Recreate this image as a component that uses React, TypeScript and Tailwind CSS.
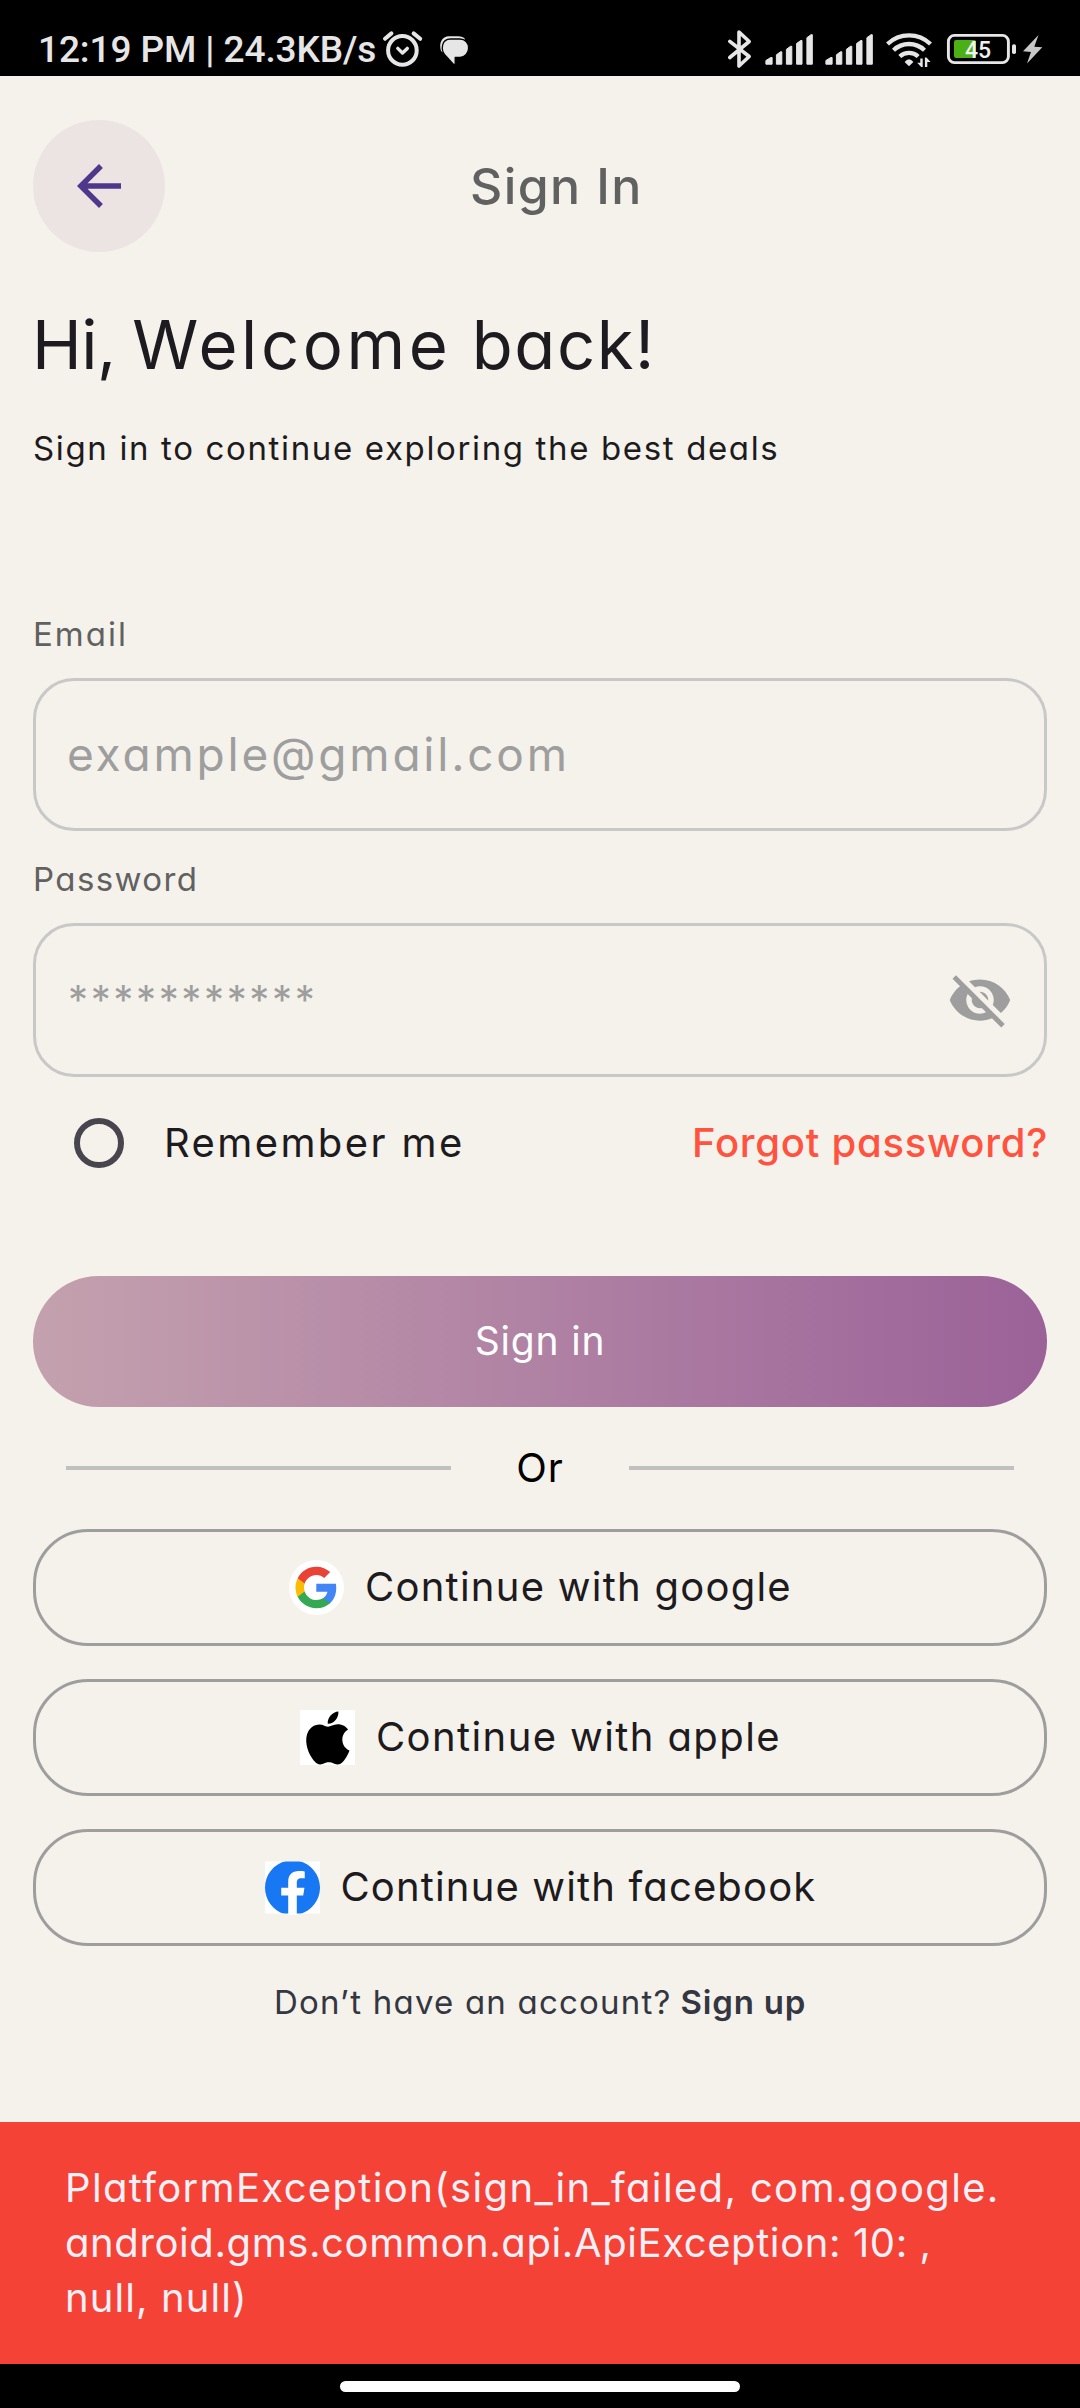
import type { ReactNode } from "react";

const SIGNAL_BARS = [
  [0, 57, 7.2],
  [10.5, 51.3, 6.4],
  [20.5, 45.8, 6.4],
  [30.7, 40, 6.4],
  [41, 34.2, 6.4],
];

function Signal({ x }: { x: number }) {
  return (
    <g>
      {SIGNAL_BARS.map(([dx, top, w]) => (
        <path
          key={dx}
          strokeWidth="1"
          strokeLinejoin="round"
          stroke="#e6e6e6"
          d={`M${x + dx + 0.5} ${top + 3.5} L${x + dx + w - 1.8} ${top + 0.5} H${x + dx + w - 0.5} V64.2 H${x + dx + 0.5} Z`}
        />
      ))}
    </g>
  );
}

function StatusBar() {
  return (
    <div className="flex h-[76px] items-start justify-between bg-black">
      <div className="flex items-start">
        <span className="w-[340px] ml-[38px] pt-[27px] whitespace-nowrap font-['Roboto',sans-serif] text-[37px] leading-[46px] font-medium tracking-[-0.1px] text-[#e6e6e6]">
          12:19 PM | 24.3KB/s
        </span>
        <svg width="96" height="76" viewBox="378 0 96 76" fill="none" stroke="#e6e6e6" strokeLinecap="round" strokeLinejoin="round">
          <circle cx="402.4" cy="50.4" r="14.3" strokeWidth="4" />
          <path strokeWidth="3.4" d="M397.8 48.4l4.7 4.6 4.8-4.6" />
          <path strokeWidth="4" d="M385 38.8l6.4-5.4M413.6 33.4l6.6 5.4" />
          <path
            fill="#e6e6e6"
            stroke="none"
            d="M441 51C438.500 43 442 36.200 449 36.200H458C461.500 36.200 463.500 37 465 39L450 58Z"
          />
          <path
            fill="#e6e6e6"
            stroke="#000"
            strokeWidth="1.3"
            d="M450.500 39H460C465 39 468.600 43 468.600 48S465 57.300 460 57.300H455.200V64.400L453.600 64.400L444.500 54.500C441 50 441 39 450.500 39Z"
          />
        </svg>
      </div>
      <svg width="360" height="76" viewBox="720 0 360 76" fill="#e6e6e6">
        <path
          d="M729.8 41.300L749.200 56.500L739 66V32L749.200 41.500L729.800 57.500"
          fill="none"
          stroke="#e6e6e6"
          strokeWidth="3.6"
          strokeLinejoin="round"
          strokeLinecap="round"
        />
        <Signal x={765.4} />
        <Signal x={825.4} />
        <g fill="none" stroke="#e6e6e6" strokeWidth="4.300">
          <path d="M887.500 44A31 31 0 0 1 930.500 44" />
          <path d="M893.500 50.200A22.500 22.500 0 0 1 924.500 50.200" />
          <path d="M899.800 56.500A13.700 13.700 0 0 1 918.200 56.500" />
        </g>
        <path d="M909 66.300L904.600 62Q909 56.500 913.400 62Z" />
        <path d="M920.300 58.500H922.700V67H921.200L917.200 62.800H920.300ZM924.900 67V57.500H926.500L930.600 62H927.300V67Z" />
        <rect x="948.400" y="35.400" width="60" height="27.200" rx="6" fill="none" stroke="#e6e6e6" strokeWidth="2.900" />
        <rect x="954" y="40" width="22" height="18" rx="2" fill="#4caf13" />
        <text x="978" y="57.500" textAnchor="middle" fontFamily="Roboto" fontWeight="500" fontSize="23" fill="#f0f0f0">
          45
        </text>
        <rect x="1012" y="44.300" width="4" height="9.700" rx="1.800" />
        <path fill="#c8c8c8" d="M1038.500 35L1023 51.300L1031 52L1027 63.500L1042.300 47.200L1034.300 46.700Z" />
      </svg>
    </div>
  );
}

function GoogleIcon() {
  return (
    <svg width="55" height="55" viewBox="0 0 55 55">
      <circle cx="27.500" cy="27.500" r="27.500" fill="#fff" />
      <g transform="translate(4.600 4.800) scale(1.890)">
        <path fill="#4285F4" d="M22.560 12.250c0-.780-.070-1.530-.200-2.250H12v4.260h5.920c-.260 1.370-1.040 2.530-2.210 3.310v2.770h3.570c2.080-1.920 3.280-4.740 3.280-8.090z" />
        <path fill="#34A853" d="M12 23c2.970 0 5.460-.980 7.280-2.660l-3.570-2.770c-.980.660-2.230 1.060-3.710 1.060-2.860 0-5.290-1.930-6.160-4.530H2.180v2.840C3.990 20.530 7.700 23 12 23z" />
        <path fill="#FBBC05" d="M5.840 14.090c-.220-.660-.350-1.360-.350-2.090s.130-1.430.350-2.090V7.070H2.180C1.430 8.550 1 10.220 1 12s.430 3.450 1.180 4.930l3.660-2.840z" />
        <path fill="#EA4335" d="M12 5.380c1.620 0 3.060.560 4.210 1.640l3.150-3.150C17.450 2.090 14.970 1 12 1 7.700 1 3.990 3.470 2.180 7.070l3.660 2.840c.870-2.600 3.300-4.530 6.160-4.530z" />
      </g>
    </svg>
  );
}

function AppleIcon() {
  return (
    <svg width="55" height="55" viewBox="0 0 55 55">
      <rect width="55" height="55" fill="#fff" />
      <path
        transform="translate(1.300 1.500) scale(2.210)"
        d="M12.152 6.896c-.948 0-2.415-1.078-3.960-1.040-2.040.027-3.910 1.183-4.961 3.014-2.117 3.675-.546 9.103 1.519 12.090 1.013 1.454 2.208 3.090 3.792 3.039 1.520-.065 2.090-.987 3.935-.987 1.831 0 2.350.987 3.960.948 1.637-.026 2.676-1.480 3.676-2.948 1.156-1.688 1.636-3.325 1.662-3.415-.039-.013-3.182-1.221-3.220-4.857-.026-3.040 2.480-4.494 2.597-4.559-1.429-2.090-3.623-2.324-4.390-2.376-2-.156-3.675 1.090-4.610 1.090zM15.530 3.830c.843-1.012 1.400-2.427 1.245-3.830-1.207.052-2.662.805-3.532 1.818-.780.896-1.454 2.338-1.273 3.714 1.338.104 2.715-.688 3.559-1.701"
      />
    </svg>
  );
}

function FacebookIcon() {
  return (
    <svg width="55" height="55" viewBox="0 0 55 55">
      <clipPath id="fb-frame">
        <rect y="1.500" width="55" height="52" />
      </clipPath>
      <rect y="1.500" width="55" height="52" fill="#fff" />
      <ellipse cx="27.500" cy="53" rx="7" ry="2" fill="#fff" />
      <g clipPath="url(#fb-frame)">
        <path
          fill="#1877F2"
          transform="scale(2.292)"
          d="M24 12.073c0-6.627-5.373-12-12-12s-12 5.373-12 12c0 5.990 4.388 10.954 10.125 11.854v-8.385H7.078v-3.470h3.047V9.430c0-3.007 1.792-4.669 4.533-4.669 1.312 0 2.686.235 2.686.235v2.953H15.830c-1.491 0-1.956.925-1.956 1.874v2.250h3.328l-.532 3.470h-2.796v8.385C19.612 23.027 24 18.062 24 12.073z"
        />
      </g>
    </svg>
  );
}

function SocialButton({ icon, label, className }: { icon: ReactNode; label: string; className: string }) {
  return (
    <button
      className={`flex h-[117px] w-full items-center gap-[21px] rounded-[55px] border-[3px] border-[#9e9e9e] text-[40px] whitespace-nowrap text-[#1d1b20] ${className}`}
    >
      {icon}
      <span className="pb-[1px] leading-[50px]">{label}</span>
    </button>
  );
}

export default function App() {
  return (
    <div className="flex h-[2408px] w-[1080px] flex-col overflow-hidden bg-[#f5f2eb] font-['Inter','Open_Sans',sans-serif] text-[#1d1b20] [font-feature-settings:'cv11']">
      <StatusBar />

      <main className="flex flex-1 flex-col px-[33px]">
        <header className="mt-[44px] flex h-[132px] items-center">
          <button className="flex size-[132px] items-center justify-center rounded-full bg-[#ece4e3]">
            <svg width="66" height="66" viewBox="0 0 24 24" fill="#4f378b">
              <path d="M20 11H7.830l5.590-5.590L12 4l-8 8 8 8 1.410-1.410L7.830 13H20v-2z" />
            </svg>
          </button>
          <span className="ml-[305px] text-[50px] leading-[60px] font-medium tracking-[1.400px] text-[#616161]">Sign In</span>
        </header>

        <h1 className="mt-[53px] -ml-[1px] text-[67px] leading-[80px] whitespace-nowrap">
          <span className="tracking-[-0.500px]">Hi, </span>
          <span className="-ml-[2px] tracking-[3.600px]">Welcome</span>
          <span className="tracking-[1.500px]"> back!</span>
        </h1>
        <p className="mt-[41px] text-[33px] leading-[44px] tracking-[1.640px]">Sign in to continue exploring the best deals</p>

        <label className="mt-[142px] text-[33px] leading-[44px] tracking-[2px] text-[#616161]">Email</label>
        <div className="mt-[22px] flex h-[153px] items-center rounded-[41px] border-[3px] border-[#c8c8c8] pl-[31px] text-[46px] tracking-[2.800px] text-[#9e9e9e]">
          example@gmail.com
        </div>

        <label className="mt-[26px] text-[33px] leading-[44px] tracking-[1.400px] text-[#616161]">Password</label>
        <div className="mt-[22px] flex h-[154px] items-center justify-between rounded-[41px] border-[3px] border-[#c8c8c8] pr-[31px] pl-[32px] text-[#9e9e9e]">
          <span className="text-[40px] leading-[50px] tracking-[2.630px]">***********</span>
          <svg width="66" height="66" viewBox="0 0 24 24" fill="#9e9e9e">
            <path d="M12 7c2.760 0 5 2.240 5 5 0 .650-.130 1.260-.360 1.830l2.920 2.920c1.510-1.260 2.700-2.890 3.430-4.750-1.730-4.390-6-7.500-11-7.500-1.400 0-2.740.250-3.980.700l2.160 2.160C10.740 7.130 11.350 7 12 7zM2 4.270l2.280 2.280.460.460C3.080 8.300 1.780 10.020 1 12c1.730 4.390 6 7.500 11 7.500 1.550 0 3.030-.300 4.380-.840l.420.420L19.730 22 21 20.730 3.270 3 2 4.270zM7.530 9.800l1.550 1.550c-.050.210-.080.430-.080.650 0 1.660 1.340 3 3 3 .220 0 .440-.030.650-.080l1.550 1.550c-.670.330-1.410.530-2.200.530-2.760 0-5-2.240-5-5 0-.790.200-1.530.530-2.200zm4.310-.780l3.150 3.150.020-.160c0-1.660-1.340-3-3-3l-.170.010z" />
          </svg>
        </div>

        <div className="flex h-[132px] items-center pl-[41px] text-[40px] leading-[50px]">
          <span className="size-[50px] rounded-full border-[6px] border-[#49454f]" />
          <span className="ml-[40px] tracking-[2.400px]">Remember me</span>
          <span className="-mr-[1px] ml-auto font-medium tracking-[0.750px] text-[#ff5340]">Forgot password?</span>
        </div>

        <button className="mt-[67px] h-[131px] w-full rounded-full bg-linear-to-r from-[#c4a1ae] to-[#9b6298] text-[39px] tracking-[0.800px] text-white">
          Sign in
        </button>

        <div className="flex h-[122px] items-center justify-between px-[33px] text-[40px] text-black">
          <span className="h-[4px] w-[385px] bg-[#c0c0c0]" />
          <span className="tracking-[1px]">Or</span>
          <span className="h-[4px] w-[385px] bg-[#c0c0c0]" />
        </div>

        <div className="flex flex-col gap-[33px]">
          <SocialButton icon={<GoogleIcon />} label="Continue with google" className="pl-[253px] tracking-[1.250px]" />
          <SocialButton icon={<AppleIcon />} label="Continue with apple" className="pl-[264px] tracking-[1.400px]" />
          <SocialButton icon={<FacebookIcon />} label="Continue with facebook" className="pl-[228.500px] tracking-[1.150px]" />
        </div>

        <p className="flex h-[112px] items-center pt-[2px] pl-[241px] text-[33px] tracking-[1.200px] whitespace-nowrap text-[#343741]">
          Don’t have an account?
          <span className="ml-[9px] font-semibold tracking-[0.800px]">Sign up</span>
        </p>
      </main>

      <div className="flex h-[242px] flex-col bg-[#f44336] pt-[38px] pl-[65px] text-[40px] leading-[55px] whitespace-nowrap text-[#f5eff7]">
        <span className="tracking-[1.350px]">PlatformException(sign_in_failed, com.google.</span>
        <span className="tracking-[0.600px]">android.gms.common.api.ApiException: 10: ,</span>
        <span className="tracking-[1.100px]">null, null)</span>
      </div>

      <div className="flex h-[44px] items-center justify-center bg-black">
        <span className="h-[11px] w-[400px] rounded-full bg-white" />
      </div>
    </div>
  );
}
